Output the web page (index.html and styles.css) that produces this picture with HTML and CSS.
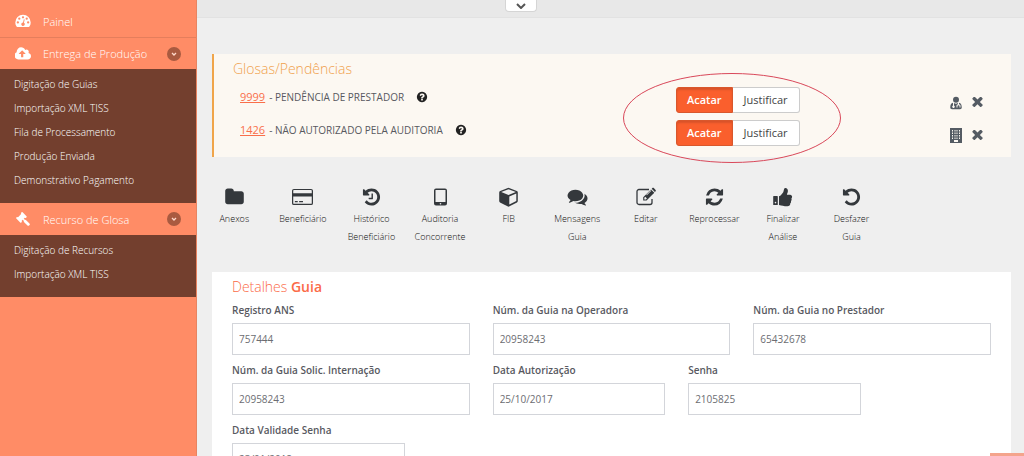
FILE: index.html
```html
<!DOCTYPE html>
<html lang="pt-BR">
<head>
<meta charset="utf-8">
<meta name="viewport" content="width=device-width, initial-scale=1">
<title>Detalhes Guia</title>
<link rel="stylesheet" href="styles.css">
</head>
<body>
<svg class="sprite" aria-hidden="true">
  <symbol id="i-help" viewBox="0 0 1792 1792"><path d="M1024 1376v-192q0-14-9-23t-23-9h-192q-14 0-23 9t-9 23v192q0 14 9 23t23 9h192q14 0 23-9t9-23zm256-672q0-88-55.500-163t-138.500-116-170-41q-243 0-371 213-15 24 8 42l132 100q7 6 19 6 16 0 25-12 53-68 86-92 34-24 86-24 48 0 85.500 26t37.500 59q0 38-20 61t-68 45q-63 28-115.500 86.500t-52.500 125.500v36q0 14 9 23t23 9h192q14 0 23-9t9-23q0-19 21.500-49.500t54.500-49.500q32-18 49-28.500t46-35 44.500-48 28-60.500 12.500-81zm384 192q0 209-103 385.500t-279.500 279.500-385.500 103-385.500-103-279.500-279.500-103-385.500 103-385.500 279.500-279.500 385.500-103 385.500 103 279.500 279.500 103 385.500z"/></symbol>
  <symbol id="i-times" viewBox="270 400 1252 1256"><path d="M1490 1322q0 40-28 68l-136 136q-28 28-68 28t-68-28l-294-294-294 294q-28 28-68 28t-68-28l-136-136q-28-28-28-68t28-68l294-294-294-294q-28-28-28-68t28-68l136-136q28-28 68-28t68 28l294 294 294-294q28-28 68-28t68 28l136 136q28 28 28 68t-28 68l-294 294 294 294q28 28 28 68z"/></symbol>
  <symbol id="i-arrow" viewBox="0 0 14 14"><circle cx="7" cy="7" r="7" fill="#a95a40"/><path d="M5 6l2 2 2-2" fill="none" stroke="#ffd9cb" stroke-width="1.300"/></symbol>
</svg>

<div class="shell">
  <nav class="sidebar">
    <a class="menu-link" href="#">
      <svg class="menu-icon" viewBox="0 0 28 24"><path fill-rule="evenodd" d="M14 1A13.500 13.500 0 0 0 .5 14.500c0 2.700.8 5.200 2.200 7.300.3.500.8.700 1.300.7h20c.5 0 1-.2 1.300-.7 1.400-2.100 2.200-4.600 2.200-7.300A13.500 13.500 0 0 0 14 1zM5 12.500a2 2 0 1 1 0 4 2 2 0 0 1 0-4zM7.500 6a2 2 0 1 1 0 4 2 2 0 0 1 0-4zM14 3.500a2 2 0 1 1 0 4 2 2 0 0 1 0-4zM20.500 6a2 2 0 1 1 0 4 2 2 0 0 1 0-4zM23 12.500a2 2 0 1 1 0 4 2 2 0 0 1 0-4zM15.500 8.800l1.400.4-1.300 5.700a3.100 3.100 0 1 1-1.500-.4z"/></svg>
      <span>Painel</span>
    </a>
    <a class="menu-link" href="#">
      <svg class="menu-icon" viewBox="0 200 1856 1400"><path d="M1216 864q0-14-9-23l-352-352q-9-9-23-9t-23 9l-351 351q-10 12-10 24 0 14 9 23t23 9h224v352q0 13 9.500 22.500t22.500 9.500h192q13 0 22.500-9.500t9.500-22.500v-352h224q13 0 22.500-9.500t9.500-22.500zm640 288q0 159-112.500 271.500t-271.500 112.500h-1088q-185 0-316.500-131.500t-131.500-316.500q0-130 70-240t188-165q-2-30-2-43 0-212 150-362t362-150q156 0 285.500 87t188.500 231q71-62 166-62 106 0 181 75t75 181q0 76-41 138 130 31 213.500 135.500t83.500 238.500z"/></svg>
      <span>Entrega de Produção</span>
      <svg class="menu-arrow"><use href="#i-arrow"/></svg>
    </a>
    <ul class="submenu">
      <li><a href="#">Digitação de Guias</a></li>
      <li><a href="#">Importação XML TISS</a></li>
      <li><a href="#">Fila de Processamento</a></li>
      <li><a href="#">Produção Enviada</a></li>
      <li><a href="#">Demonstrativo Pagamento</a></li>
    </ul>
    <a class="menu-link" href="#">
      <svg class="menu-icon" viewBox="0 0 24 22"><g transform="translate(9.500 8.500) rotate(-45)"><rect x="-4.500" y="-4" width="9" height="8"/><rect x="-7" y="-5.500" width="3.200" height="11" rx="1.200"/><rect x="3.800" y="-5.500" width="3.200" height="11" rx="1.200"/><rect x="-1.200" y="3" width="2.400" height="5"/><rect x="-2.200" y="6.500" width="4.400" height="11" rx="1.800"/></g></svg>
      <span>Recurso de Glosa</span>
      <svg class="menu-arrow"><use href="#i-arrow"/></svg>
    </a>
    <ul class="submenu">
      <li><a href="#">Digitação de Recursos</a></li>
      <li><a href="#">Importação XML TISS</a></li>
    </ul>
  </nav>

  <div class="page">
    <header class="topbar">
      <button class="topbar-toggle" type="button" aria-label="Expandir"><svg viewBox="0 0 10 6"><path d="M1 1l4 4 4-4"/></svg></button>
    </header>
    <main class="content">
      <section class="alerts">
        <h2 class="alerts-title">Glosas/Pendências</h2>
        <div class="alert-row">
          <p class="alert-text"><a href="#">9999</a> - PENDÊNCIA DE PRESTADOR <svg class="help"><use href="#i-help"/></svg></p>
          <div class="choice"><button class="choice-on" type="button">Acatar</button><button class="choice-off" type="button">Justificar</button></div>
          <div class="alert-tools">
            <button type="button" aria-label="Prestador"><svg class="tool" viewBox="0 0 24 26"><circle cx="12" cy="6.500" r="6"/><path fill-rule="evenodd" d="M6 12.500C2 13 .5 17 .5 22c0 2 1.500 3.500 3.500 3.500h16c2 0 3.500-1.500 3.500-3.500 0-5-1.500-9-5.500-9.500v3c2 .5 3 1.500 3 3.500v3h-2v-3c0-1-.7-1.700-2-1.700S15 18 15 19v3h-2v-3c0-2 1-3 3-3.500v-2.300c-2.600 1.600-5.400 1.600-8 0V18a2.500 2.500 0 1 1-2 0z"/></svg></button>
            <button type="button" aria-label="Remover"><svg class="tool-x"><use href="#i-times"/></svg></button>
          </div>
        </div>
        <div class="alert-row">
          <p class="alert-text"><a href="#">1426</a> - NÃO AUTORIZADO PELA AUDITORIA <svg class="help"><use href="#i-help"/></svg></p>
          <div class="choice"><button class="choice-on" type="button">Acatar</button><button class="choice-off" type="button">Justificar</button></div>
          <div class="alert-tools">
            <button type="button" aria-label="Operadora"><svg class="tool tool-tall" viewBox="0 0 24 30"><path fill-rule="evenodd" d="M0 0h24v30H0zM4 4v3h2V4zM9 4v3h2V4zM13 4v3h2V4zM18 4v3h2V4zM4 9v3h2V9zM9 9v3h2V9zM13 9v3h2V9zM18 9v3h2V9zM4 14v3h2v-3zM9 14v3h2v-3zM13 14v3h2v-3zM18 14v3h2v-3zM4 19v3h2v-3zM9 19v3h2v-3zM13 19v3h2v-3zM18 19v3h2v-3zM8 24v4h8v-4z"/></svg></button>
            <button type="button" aria-label="Remover"><svg class="tool-x"><use href="#i-times"/></svg></button>
          </div>
        </div>
        <svg class="highlight" viewBox="0 0 218 90" aria-hidden="true"><ellipse cx="109" cy="45" rx="108.500" ry="44.500"/></svg>
      </section>

      <div class="toolbar">
        <button type="button"><svg viewBox="0 0 1792 1792"><path d="M1728 608v704q0 92-66 158t-158 66h-1216q-92 0-158-66t-66-158v-960q0-92 66-158t158-66h320q92 0 158 66t66 158v32h672q92 0 158 66t66 158z"/></svg><span>Anexos</span></button>
        <button type="button"><svg viewBox="0 0 22 20"><path fill-rule="evenodd" d="M2 1.500h18a2 2 0 0 1 2 2v13a2 2 0 0 1-2 2H2a2 2 0 0 1-2-2v-13a2 2 0 0 1 2-2zM2 2.700a.7.700 0 0 0-.7.700V6h19.400V3.400a.7.700 0 0 0-.7-.7zM1.300 9.500v7c0 .4.300.700.7.700h18c.4 0 .7-.3.700-.7v-7zM3 14.300h3v1.300H3zM7.500 14.300h4v1.300h-4z"/></svg><span>Beneficiário</span></button>
        <button type="button"><svg viewBox="0 0 1792 1792"><path id="undo" d="M1664 896q0 156-61 298t-164 245-245 164-298 61q-172 0-327-72.500t-264-204.500q-7-10-6.500-22.500t8.500-20.500l137-138q10-9 25-9 16 2 23 12 73 95 179 147t225 52q104 0 198.500-40.500t163.500-109.500 109.500-163.500 40.500-198.500-40.500-198.500-109.500-163.500-163.500-109.500-198.500-40.500q-98 0-188 35.500t-160 101.500l137 138q31 30 14 69-17 40-59 40h-448q-26 0-45-19t-19-45v-448q0-42 40-59 39-17 69 14l130 129q107-101 244.500-156.500t284.500-55.500q156 0 298 61t245 164 164 245 61 298z"/><path d="M1024 608v448q0 14-9 23t-23 9h-320q-14 0-23-9t-9-23v-64q0-14 9-23t23-9h224v-352q0-14 9-23t23-9h64q14 0 23 9t9 23z"/></svg><span>Histórico Beneficiário</span></button>
        <button type="button"><svg viewBox="0 0 20 20"><path fill-rule="evenodd" d="M5.500 1.500h9a2 2 0 0 1 2 2v13a2 2 0 0 1-2 2h-9a2 2 0 0 1-2-2v-13a2 2 0 0 1 2-2zM5 3v12h10V3zM10 16a.8.800 0 1 0 0 1.600.8.800 0 0 0 0-1.600z"/></svg><span>Auditoria Concorrente</span></button>
        <button type="button"><svg viewBox="0 0 20 20"><path fill-rule="evenodd" d="M10 .8l8.300 3.200c.6.200 1 .8 1 1.400v8.700c0 .6-.3 1.100-.8 1.400L10 19.800l-8.500-4.300c-.5-.3-.8-.8-.8-1.400V5.400c0-.6.400-1.200 1-1.400zM10 2.300L2.700 5.100 10 8l7.300-2.900zM10.800 9.400v8.200l7-3.600V6.600z"/></svg><span>FIB</span></button>
        <button type="button"><svg viewBox="0 0 1792 1792"><path d="M1408 768q0 139-94 257t-256.500 186.500-353.500 68.500q-86 0-176-16-124 88-278 128-36 9-86 16h-3q-11 0-20.500-8t-11.500-21q-1-8 1-19l10-15 12-15q25-26 49-54t48-68q12-18 20-44-124-72-195-177t-71-224q0-139 94-257t256.500-186.500 353.500-68.500 353.500 68.500 256.500 186.500 94 257zm384 256q0 120-71 224.500t-195 176.500q10 24 20.500 44t25 38.500 22.500 29 26 29.500 23 25q18 20 20 38-3 14-13 22t-22 7q-50-7-86-16-154-40-278-128-90 16-176 16-271 0-472-132 58 4 88 4 161 0 309-45t264-129q125-92 192-212t67-254q0-77-23-152 129 71 204 178t75 230z"/></svg><span>Mensagens Guia</span></button>
        <button type="button"><svg viewBox="0 0 20 20"><path d="M16.500 12v3.500a2 2 0 0 1-2 2h-11a2 2 0 0 1-2-2v-11a2 2 0 0 1 2-2h10" fill="none" stroke="currentColor" stroke-width="1.300"/><path fill-rule="evenodd" d="M15.500 2.500L18.800 5.800 11 13.500H7.700V10.300zM8.800 10.800v1.600h1.600l1-1-1.600-1.600zM11.300 8.300l4.500-4.500-.5-.5-4.500 4.500zM16.200 1.800l.7-.7c.4-.4 1-.4 1.400 0l1.800 1.800c.4.400.4 1 0 1.400l-.7.700z"/></svg><span>Editar</span></button>
        <button type="button"><svg viewBox="0 0 1792 1792"><path d="M1639 1056q0 5-1 7-64 268-268 434.500t-478 166.500q-146 0-282.500-55t-243.500-157l-129 129q-19 19-45 19t-45-19-19-45v-448q0-26 19-45t45-19h448q26 0 45 19t19 45-19 45l-137 137q71 66 161 102t187 36q134 0 250-65t186-179q11-17 53-117 8-23 30-23h192q13 0 22.500 9.500t9.500 22.500zm25-800v448q0 26-19 45t-45 19h-448q-26 0-45-19t-19-45 19-45l138-138q-148-137-349-137-134 0-250 65t-186 179q-11 17-53 117-8 23-30 23h-199q-13 0-22.500-9.500t-9.500-22.500v-7q65-268 270-434.500t480-166.500q146 0 284 55.500t245 156.500l130-129q19-19 45-19t45 19 19 45z"/></svg><span>Reprocessar</span></button>
        <button type="button"><svg viewBox="0 0 20 20"><path fill-rule="evenodd" d="M1.300 9h3.400c.4 0 .6.300.6.600v7.800c0 .4-.2.600-.6.600H1.300c-.4 0-.6-.2-.6-.6V9.600c0-.3.200-.6.600-.6zM3 14.800a.8.800 0 1 0 0 1.600.8.800 0 0 0 0-1.600z"/><path d="M6.500 9.200c1.800-.2 3.400-2.900 4.200-4 .6-.9.500-3.700 1.700-4.200 2-.3 3 1.200 3 3 0 1.500-.8 2.600-1 3.700h3.200c1.200 0 2 1 2 2 0 .7-.3 1.300-.7 1.700.4.900.3 2-.4 2.700.2 1-.1 1.900-.8 2.500.2 1.800-1 2.700-2.800 2.700-3.700 0-5.500-1-8.400-1.400z"/></svg><span>Finalizar Análise</span></button>
        <button type="button"><svg viewBox="0 0 1792 1792"><use href="#undo"/></svg><span>Desfazer Guia</span></button>
      </div>

      <section class="card">
        <h2 class="card-title">Detalhes <b>Guia</b></h2>
        <form class="fields">
          <div class="field wide"><label for="ans">Registro ANS</label><input id="ans" type="text" value="757444"></div>
          <div class="field wide"><label for="operadora">Núm. da Guia na Operadora</label><input id="operadora" type="text" value="20958243"></div>
          <div class="field wide"><label for="prestador">Núm. da Guia no Prestador</label><input id="prestador" type="text" value="65432678"></div>
          <div class="field wide"><label for="internacao">Núm. da Guia Solic. Internação</label><input id="internacao" type="text" value="20958243"></div>
          <div class="field"><label for="autorizacao">Data Autorização</label><input id="autorizacao" type="text" value="25/10/2017"></div>
          <div class="field"><label for="senha">Senha</label><input id="senha" type="text" value="2105825"></div>
          <div class="field row-start"><label for="validade">Data Validade Senha</label><input id="validade" type="text" value="23/01/2018"></div>
        </form>
      </section>
    </main>
  </div>
</div>
<a class="to-top" href="#" aria-label="Topo"></a>
</body>
</html>
```

FILE: styles.css
```css
* { box-sizing: border-box; }

body {
  margin: 0;
  background: #efefef;
  color: #58595f;
  font-family: "Open Sans", "Noto Sans", sans-serif;
  font-size: 12px;
}

button {
  border: 0;
  padding: 0;
  background: none;
  color: inherit;
  font: inherit;
  cursor: pointer;
}

svg { display: block; fill: currentColor; }
.sprite { position: absolute; width: 0; height: 0; }

.shell {
  display: flex;
  height: 100vh;
  overflow: hidden;
}

/* Sidebar */
.sidebar {
  flex: 0 0 197px;
  padding-top: 5px;
  background: #ff8c66;
  border-right: 1px solid #e88461;
}

.menu-link {
  display: flex;
  align-items: center;
  height: 32px;
  padding: 0 15px;
  color: #fff;
  font-size: 11px;
  font-weight: 300;
  text-decoration: none;
}
.menu-link + .menu-link { border-top: 1px solid #e57e5c; }
.menu-icon { width: 16px; height: 14px; margin-right: 12px; }
.menu-arrow { width: 14px; height: 14px; margin-left: auto; }

.submenu {
  margin: 0;
  padding: 3px 0 11px;
  list-style: none;
  background: #733f2e;
}
.submenu a {
  display: block;
  padding-left: 14px;
  color: #fff;
  font-size: 10px;
  font-weight: 300;
  line-height: 24px;
  text-decoration: none;
}

/* Page */
.page { flex: 1; min-width: 0; }

.topbar {
  position: relative;
  height: 18px;
  background: #e8e8e8;
  border-bottom: 1px solid #e2e2e2;
}
.topbar-toggle {
  position: absolute;
  top: 0;
  left: 308px;
  display: grid;
  place-items: center;
  width: 32px;
  height: 12px;
  border: 1px solid #d5d5d5;
  border-top: 0;
  border-radius: 0 0 4px 4px;
  background: #fff;
}
.topbar-toggle svg { width: 10px; height: 6px; fill: none; stroke: #555; stroke-width: 2; }

.content { padding: 36px 13px 0 15px; }

/* Pending items */
.alerts {
  position: relative;
  padding: 5px 28px 8px 26px;
  border-left: 2px solid #f0a54a;
  background: #fcf8f2;
}
.alerts-title {
  margin: 0 0 4px -7px;
  color: #f0a04c;
  font-size: 14px;
  font-weight: 300;
  line-height: 20px;
}
.alert-row {
  display: grid;
  grid-template-columns: 436px 1fr auto;
  align-items: center;
  height: 33px;
}
.alert-text {
  display: flex;
  align-items: center;
  gap: 4px;
  margin: 0;
  padding-bottom: 6px;
  font-size: 10px;
  line-height: 16px;
}
.alert-text a { color: #f96f4b; font-size: 11px; }
.help { width: 12px; height: 12px; margin-left: 8px; color: #222; }

.choice { display: flex; font-size: 11px; }
.choice button {
  height: 26px;
  padding: 0 11px;
  border: 1px solid #ccc;
  line-height: 24px;
}
.choice .choice-on {
  padding: 0 10px;
  border-color: #d9572c;
  border-radius: 3px 0 0 3px;
  background: #fa5f2d;
  box-shadow: inset 0 2px 2px #d9532a;
  color: #fff;
  font-weight: 600;
}
.choice .choice-off {
  border-left: 0;
  border-radius: 0 3px 3px 0;
  background: #fff;
  color: #444;
}

.alert-tools { display: flex; align-items: center; gap: 10px; color: #545b63; padding-top: 6px; }
.tool { width: 12px; height: 14px; }
.tool-tall { height: 15px; }
.tool-x { width: 11px; height: 11px; }

.highlight {
  position: absolute;
  top: 19px;
  left: 409px;
  width: 218px;
  height: 90px;
  fill: none;
  stroke: #d9485a;
  pointer-events: none;
}

/* Actions */
.toolbar {
  display: grid;
  grid-template-columns: repeat(12, 1fr);
  align-items: start;
  margin: 30px -12px 26px;
}
.toolbar button {
  display: flex;
  flex-direction: column;
  align-items: center;
  gap: 3px;
  color: #34383c;
}
.toolbar svg { width: 21px; height: 20px; }
.toolbar span { padding: 0 8px; font-size: 9px; font-weight: 300; line-height: 18px; color: #111; }

/* Details */
.card { padding: 4px 20px 20px; background: #fff; }
.card-title {
  margin: 0 0 5px;
  color: #fb6b48;
  font-size: 14px;
  font-weight: 300;
  line-height: 22px;
}
.card-title b { font-weight: 600; }
.fields {
  display: grid;
  grid-template-columns: repeat(12, 1fr);
  gap: 8px 23px;
}
.field { grid-column: span 3; }
.field.wide { grid-column: span 4; }
.field.row-start { grid-column: 1 / span 3; }
.field label {
  display: block;
  margin-bottom: 5px;
  font-size: 10px;
  font-weight: 600;
  line-height: 15px;
}
.field input {
  display: block;
  width: 100%;
  height: 32px;
  padding: 0 6px;
  border: 1px solid #d3d5da;
  border-radius: 0;
  background: #fff;
  color: #6c6d72;
  font: inherit;
  font-size: 10px;
}

.to-top {
  position: fixed;
  right: 0;
  bottom: 0;
  width: 34px;
  height: 3px;
  background: #f4a48c;
}
```
